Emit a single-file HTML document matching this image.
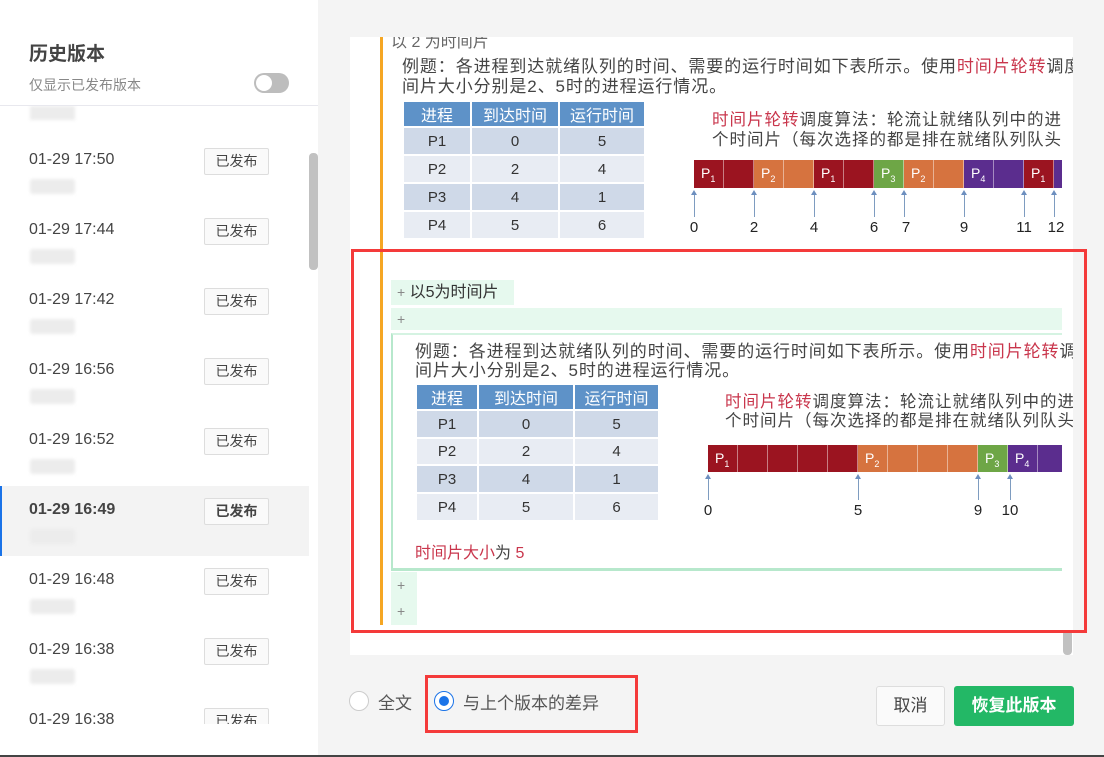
<!DOCTYPE html>
<html><head><meta charset="utf-8"><style>
*{margin:0;padding:0;box-sizing:border-box}
body{width:1104px;height:757px;overflow:hidden;background:#f4f4f4;font-family:"Liberation Sans","Noto Sans CJK SC",sans-serif;position:relative;color:#333}
.a{position:absolute}
.side{left:0;top:0;width:318px;height:755px;background:#fff}
.item{position:absolute;left:0;width:309px;height:70px}
.item .t{position:absolute;left:29px;top:26px;font-size:16px;color:#444}
.item .b{position:absolute;left:204px;top:23px;width:65px;height:27px;border:1px solid #ddd;border-radius:2px;background:#fafafa;font-size:14px;text-align:center;line-height:25px;color:#444}
.item .blur{position:absolute;left:30px;top:54px;width:45px;height:15px;background:#ececec;border-radius:3px;filter:blur(1.5px)}
.img{font-family:"Liberation Sans","Noto Sans CJK SC",sans-serif;color:#444}
.ln1{font-size:17px;letter-spacing:0.9px}
.ln2{font-size:16.5px;letter-spacing:1px}
table{border-collapse:collapse;position:absolute;font-size:15px;text-align:center;color:#333}
td,th{border:2px solid #fff}
th{background:#5e92c8;color:#fff;font-weight:normal;font-size:16px}
tr:nth-child(even) td{background:#cfd9e8}
tr:nth-child(odd) td{background:#e8ecf3}
.g{position:absolute;height:100%;top:0;border-right:1px solid rgba(255,255,255,.45);color:#fff;font-size:14px;padding-left:7px;line-height:27px}
.g sub{font-size:9px}
.ar{position:absolute;width:1px;background:#7e9cc0}
.ar:before{content:"";position:absolute;left:-3px;top:-2px;border:3.5px solid transparent;border-bottom:5px solid #6d8fbf;border-top:none}
.lb{position:absolute;font-size:15px;color:#222;transform:translateX(-50%)}
.red{color:#c9364c}
.plus{color:#888;font-size:14px}
</style></head><body>
<div class="a side">
 <div class="a" style="left:29px;top:39px;font-size:19px;font-weight:bold;color:#444">历史版本</div>
 <div class="a" style="left:29px;top:75px;font-size:14px;color:#888">仅显示已发布版本</div>
 <div class="a" style="left:254px;top:73px;width:35px;height:20px;border-radius:10px;background:#bdbdbd"><div class="a" style="left:2px;top:2px;width:16px;height:16px;border-radius:50%;background:#fff"></div></div>
 <div class="a" style="left:0;top:105px;width:318px;height:1px;background:#e8e8ee"></div>
 <div class="a" style="left:0;top:106px;width:318px;height:618px;overflow:hidden">
  <div class="a" style="left:30px;top:0;width:45px;height:14px;background:#ececec;filter:blur(1.5px)"></div>
  <div class="item" style="top:19px"><span class="t">01-29 17:50</span><span class="b">已发布</span><span class="blur"></span></div>
  <div class="item" style="top:89px"><span class="t">01-29 17:44</span><span class="b">已发布</span><span class="blur"></span></div>
  <div class="item" style="top:159px"><span class="t">01-29 17:42</span><span class="b">已发布</span><span class="blur"></span></div>
  <div class="item" style="top:229px"><span class="t">01-29 16:56</span><span class="b">已发布</span><span class="blur"></span></div>
  <div class="item" style="top:299px"><span class="t">01-29 16:52</span><span class="b">已发布</span><span class="blur"></span></div>
  <div class="item" style="top:380px;background:#f3f3f3;border-left:2px solid #1a73e8"><span class="t" style="left:27px;top:15px;font-weight:bold">01-29 16:49</span><span class="b" style="left:202px;top:12px;font-weight:bold">已发布</span><span class="blur" style="left:28px;top:43px"></span></div>
  <div class="item" style="top:439px"><span class="t">01-29 16:48</span><span class="b">已发布</span><span class="blur"></span></div>
  <div class="item" style="top:509px"><span class="t">01-29 16:38</span><span class="b">已发布</span><span class="blur"></span></div>
  <div class="item" style="top:579px"><span class="t">01-29 16:38</span><span class="b">已发布</span><span class="blur"></span></div>
 </div>
 <div class="a" style="left:309px;top:153px;width:9px;height:117px;border-radius:4px;background:#c1c1c1"></div>
</div>
<div class="a" style="left:0;top:755px;width:1104px;height:2px;background:#444"></div>

<div class="a" style="left:350px;top:37px;width:723px;height:618px;background:#fff;overflow:hidden">
 <div class="a" style="left:30px;top:0;width:3px;height:588px;background:#f5a623"></div>
 <div class="a" style="left:41px;top:-9px;font-size:16px;color:#666">以 2 为时间片</div>
 <div class="a img ln1" style="left:52px;top:20px;line-height:20px;white-space:nowrap">例题：各进程到达就绪队列的时间、需要的运行时间如下表所示。使用<span class="red">时间片轮转</span>调度<br>间片大小分别是2、5时的进程运行情况。</div>
 <table style="left:52px;top:63px;width:244px">
  <tr style="height:26px"><th style="width:68px">进程</th><th style="width:88px">到达时间</th><th>运行时间</th></tr>
  <tr style="height:28px"><td>P1</td><td>0</td><td>5</td></tr>
  <tr style="height:28px"><td>P2</td><td>2</td><td>4</td></tr>
  <tr style="height:28px"><td>P3</td><td>4</td><td>1</td></tr>
  <tr style="height:28px"><td>P4</td><td>5</td><td>6</td></tr>
 </table>
 <div class="a img ln2" style="left:362px;top:73px;line-height:20px;white-space:nowrap"><span class="red">时间片轮转</span>调度算法：轮流让就绪队列中的进<br>个时间片（每次选择的都是排在就绪队列队头</div>
 <div class="a" style="left:344px;top:123px;width:368px;height:28px;overflow:hidden">
  <div class="g" style="left:0;width:30px;background:#9b1420">P<sub>1</sub></div><div class="g" style="left:30px;width:30px;background:#9b1420"></div>
  <div class="g" style="left:60px;width:30px;background:#d6733f">P<sub>2</sub></div><div class="g" style="left:90px;width:30px;background:#d6733f"></div>
  <div class="g" style="left:120px;width:30px;background:#9b1420">P<sub>1</sub></div><div class="g" style="left:150px;width:30px;background:#9b1420"></div>
  <div class="g" style="left:180px;width:30px;background:#6ea646">P<sub>3</sub></div>
  <div class="g" style="left:210px;width:30px;background:#d6733f">P<sub>2</sub></div><div class="g" style="left:240px;width:30px;background:#d6733f"></div>
  <div class="g" style="left:270px;width:30px;background:#5b2d8e">P<sub>4</sub></div><div class="g" style="left:300px;width:30px;background:#5b2d8e"></div>
  <div class="g" style="left:330px;width:30px;background:#9b1420">P<sub>1</sub></div><div class="g" style="left:360px;width:30px;background:#5b2d8e"></div>
 </div>
 <div class="ar" style="left:344px;top:155px;height:25px"></div><div class="ar" style="left:404px;top:155px;height:25px"></div><div class="ar" style="left:464px;top:155px;height:25px"></div><div class="ar" style="left:524px;top:155px;height:25px"></div><div class="ar" style="left:554px;top:155px;height:25px"></div><div class="ar" style="left:614px;top:155px;height:25px"></div><div class="ar" style="left:674px;top:155px;height:25px"></div><div class="ar" style="left:704px;top:155px;height:25px"></div>
 <div class="lb" style="left:344px;top:182px">0</div><div class="lb" style="left:404px;top:182px">2</div><div class="lb" style="left:464px;top:182px">4</div><div class="lb" style="left:524px;top:182px">6</div><div class="lb" style="left:556px;top:182px">7</div><div class="lb" style="left:614px;top:182px">9</div><div class="lb" style="left:674px;top:182px">11</div><div class="lb" style="left:706px;top:182px">12</div>

 <div class="a" style="left:41px;top:243px;width:123px;height:25px;background:#e6f9ee;font-size:16px;line-height:25px;padding-left:6px"><span class="plus">+</span> 以5为时间片</div>
 <div class="a plus" style="left:41px;top:271px;width:671px;height:22px;background:#e6f9ee;line-height:22px;padding-left:6px">+</div>
 <div class="a" style="left:41px;top:296px;width:671px;height:238px;border-left:2px solid #b7e8cc;border-bottom:3px solid #b7e8cc;border-top:2px solid #d5f3e2"></div>
 <div class="a img ln1" style="left:65px;top:305px;line-height:19px;white-space:nowrap">例题：各进程到达就绪队列的时间、需要的运行时间如下表所示。使用<span class="red">时间片轮转</span>调度<br>间片大小分别是2、5时的进程运行情况。</div>
 <table style="left:65px;top:346px;width:245px">
  <tr style="height:26px"><th style="width:62px">进程</th><th style="width:96px">到达时间</th><th>运行时间</th></tr>
  <tr style="height:28px"><td>P1</td><td>0</td><td>5</td></tr>
  <tr style="height:27px"><td>P2</td><td>2</td><td>4</td></tr>
  <tr style="height:28px"><td>P3</td><td>4</td><td>1</td></tr>
  <tr style="height:28px"><td>P4</td><td>5</td><td>6</td></tr>
 </table>
 <div class="a img ln2" style="left:375px;top:356px;line-height:19px;white-space:nowrap"><span class="red">时间片轮转</span>调度算法：轮流让就绪队列中的进<br>个时间片（每次选择的都是排在就绪队列队头</div>
 <div class="a" style="left:358px;top:408px;width:354px;height:27px;overflow:hidden">
  <div class="g" style="left:0;width:30px;background:#9b1420">P<sub>1</sub></div><div class="g" style="left:30px;width:30px;background:#9b1420"></div><div class="g" style="left:60px;width:30px;background:#9b1420"></div><div class="g" style="left:90px;width:30px;background:#9b1420"></div><div class="g" style="left:120px;width:30px;background:#9b1420"></div>
  <div class="g" style="left:150px;width:30px;background:#d6733f">P<sub>2</sub></div><div class="g" style="left:180px;width:30px;background:#d6733f"></div><div class="g" style="left:210px;width:30px;background:#d6733f"></div><div class="g" style="left:240px;width:30px;background:#d6733f"></div>
  <div class="g" style="left:270px;width:30px;background:#6ea646">P<sub>3</sub></div>
  <div class="g" style="left:300px;width:30px;background:#5b2d8e">P<sub>4</sub></div><div class="g" style="left:330px;width:30px;background:#5b2d8e"></div>
 </div>
 <div class="ar" style="left:358px;top:439px;height:24px"></div><div class="ar" style="left:508px;top:439px;height:24px"></div><div class="ar" style="left:628px;top:439px;height:24px"></div><div class="ar" style="left:660px;top:439px;height:24px"></div>
 <div class="lb" style="left:358px;top:465px">0</div><div class="lb" style="left:508px;top:465px">5</div><div class="lb" style="left:628px;top:465px">9</div><div class="lb" style="left:660px;top:465px">10</div>
 <div class="a" style="left:65px;top:502px;font-size:16px;color:#c9364c">时间片大小<span style="color:#444">为</span> 5</div>
 <div class="a plus" style="left:41px;top:535px;width:26px;height:53px;background:#e6f9ee;padding-left:6px;line-height:26px">+<br>+</div>
</div>
<div class="a" style="left:1063px;top:630px;width:9px;height:25px;border-radius:4px;background:#c1c1c1"></div>
<div class="a" style="left:351px;top:249px;width:736px;height:384px;border:3px solid #f43a3a"></div>

<div class="a" style="left:349px;top:691px;width:20px;height:20px;border-radius:50%;border:1px solid #ccc;background:#fff"></div>
<div class="a" style="left:378px;top:689px;font-size:17px;color:#555">全文</div>
<div class="a" style="left:425px;top:675px;width:213px;height:58px;border:3px solid #f43a3a"></div>
<div class="a" style="left:434px;top:691px;width:20px;height:20px;border-radius:50%;border:1px solid #1a73e8;background:#fff"><div class="a" style="left:4px;top:4px;width:10px;height:10px;border-radius:50%;background:#1a73e8"></div></div>
<div class="a" style="left:463px;top:689px;font-size:17px;color:#555">与上个版本的差异</div>
<div class="a" style="left:876px;top:686px;width:69px;height:40px;border:1px solid #ddd;border-radius:3px;background:#fafafa;font-size:17px;text-align:center;line-height:38px;color:#444">取消</div>
<div class="a" style="left:954px;top:686px;width:120px;height:40px;border-radius:3px;background:#23b866;font-size:17px;text-align:center;line-height:40px;color:#fff;font-weight:bold">恢复此版本</div>
</body></html>
